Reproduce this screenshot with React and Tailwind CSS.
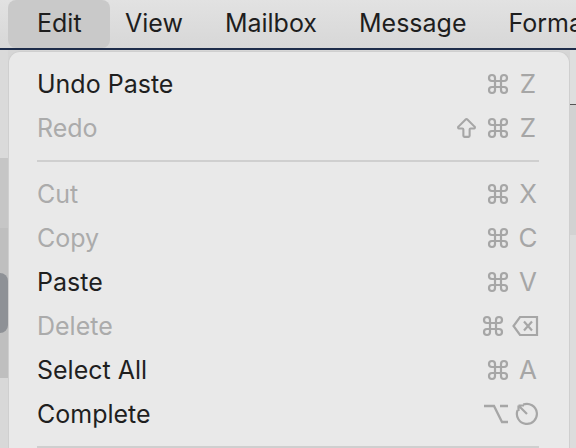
import { Command, ArrowBigUp } from "lucide-react";

const GRAY = "#a6a6a6";

function Cmd() {
  return <Command size={24} strokeWidth={2.2} color={GRAY} />;
}

function KeyText({ children }) {
  return (
    <span className="w-[22px] text-center text-[26px] leading-none" style={{ color: GRAY }}>
      {children}
    </span>
  );
}

function DeleteKey() {
  return (
    <svg width="27" height="22" viewBox="0 0 27 22" fill="none" stroke={GRAY} strokeWidth="2.2">
      <path d="M8 2h17v18H8L1.5 11z" strokeLinejoin="miter" />
      <path d="M12 6.5l8 9M20 6.5l-8 9" />
    </svg>
  );
}

function OptionKey() {
  return (
    <svg width="24" height="20" viewBox="0 0 24 20" fill="none" stroke={GRAY} strokeWidth="2.3">
      <path d="M0 2h10l8 16h6M16 2h8" />
    </svg>
  );
}

function EscKey() {
  return (
    <svg width="24" height="24" viewBox="0 0 24 24" fill="none" stroke={GRAY} strokeWidth="2.2">
      <path d="M8.2 2.6A10 10 0 1 1 2.6 8.2" />
      <path d="M3.5 3.5l8.5 8.5M3.5 3.5h5.5M3.5 3.5v5.5" />
    </svg>
  );
}

const items = [
  { label: "Undo Paste", on: true, keys: [<Cmd />, <KeyText>Z</KeyText>] },
  {
    label: "Redo",
    keys: [<ArrowBigUp size={25} strokeWidth={2} color={GRAY} />, <Cmd />, <KeyText>Z</KeyText>],
  },
  "sep",
  { label: "Cut", keys: [<Cmd />, <KeyText>X</KeyText>] },
  { label: "Copy", keys: [<Cmd />, <KeyText>C</KeyText>] },
  { label: "Paste", on: true, keys: [<Cmd />, <KeyText>V</KeyText>] },
  { label: "Delete", keys: [<Cmd />, <DeleteKey />] },
  { label: "Select All", on: true, keys: [<Cmd />, <KeyText>A</KeyText>] },
  { label: "Complete", on: true, keys: [<OptionKey />, <EscKey />] },
  "sep",
];

export default function App() {
  const font = { fontFamily: "Inter, 'Noto Sans', sans-serif" };
  return (
    <div className="w-[576px] h-[448px] overflow-hidden bg-[#d6d6d6]" style={font}>
      {/* Menu bar */}
      <div className="h-[48px] flex items-stretch bg-gradient-to-b from-[#e2e2e2] to-[#d7d7d7] text-[25px] text-[#1e1e1e] whitespace-nowrap overflow-hidden">
        <div className="shrink-0 ml-[8px] w-[102px] rounded-[8px] bg-[#c9c9c9] pl-[29px] flex items-center">Edit</div>
        <div className="shrink-0 pl-[15px] flex items-center">View</div>
        <div className="shrink-0 pl-[42px] flex items-center">Mailbox</div>
        <div className="shrink-0 pl-[42px] flex items-center">Message</div>
        <div className="shrink-0 pl-[42px] flex items-center">Format</div>
      </div>
      <div className="h-[2px] bg-[#1d2c4a]" />

      <div className="flex h-[398px]">
        {/* content behind, left */}
        <div className="w-[8px] flex flex-col">
          <div className="h-[108px] bg-[#dadada]" />
          <div className="h-[70px] bg-[#c6c6c6]" />
          <div className="h-[150px] bg-[#bfbfbf] flex items-center">
            <div className="w-[8px] h-[60px] rounded-r-full bg-[#8e9196]" />
          </div>
          <div className="flex-1 bg-[#d8d8d8]" />
        </div>

        {/* Menu panel */}
        <div className="flex-1 mt-[1px] rounded-t-[12px] bg-[#e9e9e9] border border-[#cfcfcf] border-b-0 pt-[10px] pl-[28px] pr-[30px]">
          {items.map((it, i) =>
            it === "sep" ? (
              <div key={i} className="h-[22px] flex items-center">
                <div className="h-[2px] w-full bg-[#cfcfcf] mr-[-5px]" />
              </div>
            ) : (
              <div key={i} className="h-[44px] flex items-center justify-between">
                <span
                  className={"text-[25px] leading-none " + (it.on ? "text-[#1f1f1f]" : "text-[#ababab]")}
                >
                  {it.label}
                </span>
                <span className="flex items-center gap-[7px]">
                  {it.keys.map((k, j) => (
                    <span key={j} className="flex items-center">
                      {k}
                    </span>
                  ))}
                </span>
              </div>
            )
          )}
        </div>

        {/* content behind, right */}
        <div className="w-[6px] flex flex-col">
          <div className="h-[55px] bg-[#dedede] border-b border-[#555]" />
          <div className="h-[130px] bg-[#d2d2d2]" />
          <div className="flex-1 bg-[#dcdcdc]" />
        </div>
      </div>
    </div>
  );
}
